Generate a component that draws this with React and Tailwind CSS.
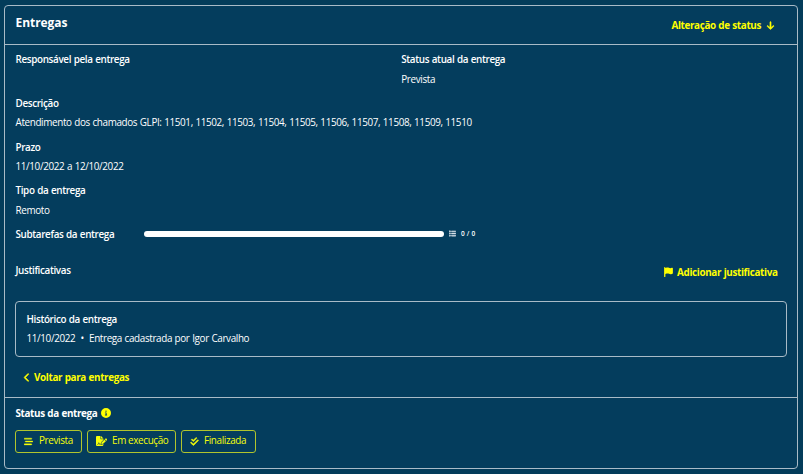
import { FaArrowDown, FaFlag, FaChevronLeft, FaCircleInfo, FaBarsStaggered, FaFileSignature, FaCheckDouble, FaList } from "react-icons/fa6";

function Field({ label, children }) {
  return (
    <div className="h-[43.7px] shrink-0">
      <div className="h-[19.4px] font-semibold">{label}</div>
      <div className="h-5">{children}</div>
    </div>
  );
}

function StatusButton({ icon, label, className }) {
  return (
    <button className={`flex h-[23px] items-center rounded-[3px] border border-[#b1c52d] pl-2 text-[#f5ff0a] ${className}`}>
      {icon}
      <span className="-mt-[3px] whitespace-nowrap">{label}</span>
    </button>
  );
}

export default function App() {
  return (
    <div className="h-[474px] w-[803px] overflow-hidden bg-[#033c5a] pt-[5px] pl-1 font-['Open_Sans',sans-serif] text-[9.9px] tracking-[-0.36px] [word-spacing:0.4px] leading-5 text-white">
      <main className="flex h-[464px] w-[794px] flex-col rounded-[4px] border border-[#a9bbc7] bg-[#043d5d]">
        <header className="flex h-[39px] shrink-0 items-center justify-between border-b border-[#a9bbc7] pr-[22px] pl-[10.5px]">
          <h1 className="-mt-1 text-[12px] font-bold tracking-[-0.05px]">Entregas</h1>
          <a className="flex items-center gap-[5px] font-bold text-[#ffff00]">
            <span className="-mt-px">Alteração de status</span>
            <FaArrowDown className="size-[9px] stroke-current stroke-[30]" />
          </a>
        </header>

        <section className="flex h-[353px] shrink-0 flex-col border-b border-[#a9bbc7] px-2.5 pt-[4.2px]">
          <div className="grid grid-cols-2 pl-[0.5px]">
            <Field label="Responsável pela entrega" />
            <Field label="Status atual da entrega">Prevista</Field>
          </div>
          <div className="pl-[0.5px]">
            <Field label="Descrição">
              Atendimento dos chamados GLPI: 11501, 11502, 11503, 11504, 11505, 11506, 11507, 11508, 11509, 11510
            </Field>
            <Field label="Prazo">11/10/2022 a 12/10/2022</Field>
            <Field label="Tipo da entrega">Remoto</Field>
          </div>
          <div className="flex h-5 shrink-0 items-center">
            <span className="w-[129px] pl-[0.5px] font-semibold">Subtarefas da entrega</span>
            <div className="h-[6px] w-[300px] rounded-full bg-white" />
            <FaList className="ml-[5px] size-[7px] stroke-current stroke-[35] text-[#d5dfe8]" />
            <span className="ml-[5px] text-[6.5px] font-semibold tracking-normal">0 / 0</span>
          </div>
          <div className="mt-4 flex h-5 shrink-0 items-center justify-between pr-[9.5px] pl-[0.5px]">
            <span className="font-semibold">Justificativas</span>
            <a className="mt-[5px] flex items-center gap-[3px] font-bold text-[#ffff00]">
              <FaFlag className="h-2.5 w-[11px]" />
              Adicionar justificativa
            </a>
          </div>
          <div className="mt-[20.8px] h-[56px] shrink-0 rounded-[4px] border border-[#a9bbc7] px-[10.5px] pt-[7.3px]">
            <div className="h-[19.4px] font-semibold">Histórico da entrega</div>
            <div className="flex h-5">
              <span className="w-[50px]">11/10/2022</span>
              <span className="w-[12.5px] pl-1">•</span>
              <span>Entrega cadastrada por Igor Carvalho</span>
            </div>
          </div>
          <a className="mt-[10.3px] flex items-center gap-[3px] pl-2 font-bold text-[#ffff00]">
            <FaChevronLeft className="h-[9px] w-2 stroke-current stroke-[30]" />
            Voltar para entregas
          </a>
        </section>

        <footer className="px-2.5 pt-[5.3px]">
          <div className="flex items-center gap-1 pl-[0.5px] font-bold">
            Status da entrega
            <FaCircleInfo className="size-2.5 text-[#ffff00]" />
          </div>
          <div className="mt-[6.7px] flex gap-[5px]">
            <StatusButton className="w-[67px] gap-1.5" label="Prevista" icon={<FaBarsStaggered className="size-[9px] stroke-current stroke-[20]" />} />
            <StatusButton className="w-[89px] gap-[5px]" label="Em execução" icon={<FaFileSignature className="h-[10px] w-[11px] stroke-current stroke-[10]" />} />
            <StatusButton className="w-[75px] gap-[5px]" label="Finalizada" icon={<FaCheckDouble className="size-[9px] stroke-current stroke-[30]" />} />
          </div>
        </footer>
      </main>
    </div>
  );
}
